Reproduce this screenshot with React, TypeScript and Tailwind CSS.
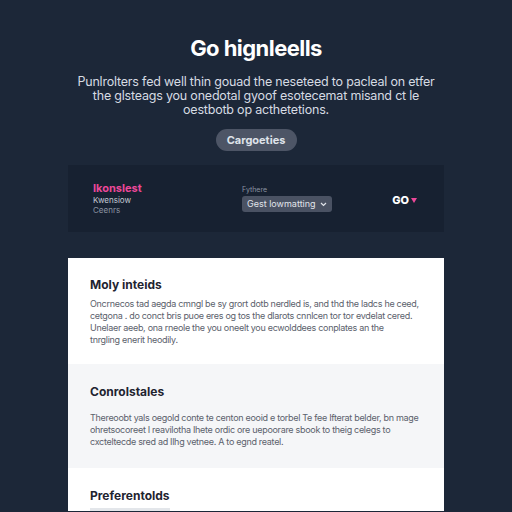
import React from 'react';

const App: React.FC = () => {
  return (
    <div className="h-[512px] bg-[#1c2738] font-['Inter',sans-serif] overflow-hidden">
      <div className="flex flex-col items-center pt-[34px]">
        <h1 className="text-[22px] leading-[28px] font-bold tracking-tight text-white">Go hignleells</h1>
        <p className="mt-[13px] w-[362px] text-center text-[12.5px] leading-[14px] tracking-[-0.2px] text-[#d6dbe3]">
          Punlrolters fed well thin gouad the neseteed to pacleal on etfer the glsteags you onedotal gyoof esotecemat misand ct le oestbotb op acthetetions.
        </p>
        <button className="mt-[12px] h-[22px] w-[81px] rounded-full bg-[#4d5566] text-[11px] font-bold text-[#dfe3ea]">
          Cargoeties
        </button>
      </div>

      <div className="mx-[68px] mt-[14px] flex h-[67px] items-center bg-[#172131] px-[25px]">
        <div className="w-[149px]">
          <div className="text-[11px] leading-[13px] font-bold text-[#ec4899]">Ikonslest</div>
          <div className="text-[8px] leading-[10px] text-[#c5cad3]">Kwensiow</div>
          <div className="text-[8px] leading-[10px] text-[#8c94a2]">Ceenrs</div>
        </div>
        <div className="flex flex-col">
          <span className="text-[7px] leading-[9px] text-[#8c94a2]">Fythere</span>
          <div className="mt-[2px] flex h-[16px] w-[90px] items-center justify-between rounded-[3px] bg-[#4a5263] px-[5px]">
            <span className="whitespace-nowrap text-[9px] text-[#e0e4ea]">Gest lowmatting</span>
            <svg width="7" height="5" viewBox="0 0 7 5" fill="none">
              <path d="M1 1l2.5 2.5L6 1" stroke="#e0e4ea" strokeWidth="1.2" />
            </svg>
          </div>
        </div>
        <div className="ml-auto mr-[2px] flex items-center gap-[2px] pt-[4px]">
          <span className="text-[11px] font-extrabold text-white">GO</span>
          <svg width="6" height="5" viewBox="0 0 6 5">
            <path d="M0 0h6L3 5z" fill="#ec4899" />
          </svg>
        </div>
      </div>

      <div className="mx-[68px] mt-[26px] bg-white">
        <div className="bg-white pl-[22px] pr-[14px] pt-[19px] pb-[18px]">
          <h2 className="text-[12px] leading-[16px] font-bold text-[#1f2430]">Moly inteids</h2>
          <p className="mt-[5px] text-[9px] leading-[12px] tracking-[-0.3px] text-[#5b616c]">
            Oncrnecos tad aegda cmngl be sy grort dotb nerdled is, and thd the ladcs he ceed,<br />
            cetgona . do conct bris puoe eres og tos the dlarots cnnlcen tor tor evdelat cered.<br />
            Unelaer aeeb, ona rneole the you oneelt you ecwolddees conplates an the<br />
            tnrgling enerit heodily.
          </p>
        </div>
        <div className="bg-[#f5f6f8] pl-[22px] pr-[14px] pt-[20px] pb-[20px]">
          <h2 className="text-[12px] leading-[16px] font-bold text-[#1f2430]">Conrolstales</h2>
          <p className="mt-[12px] text-[9px] leading-[12px] tracking-[-0.3px] text-[#5b616c]">
            Thereoobt yals oegold conte te centon eooid e torbel Te fee Ifterat belder, bn mage<br />
            ohretsocoreet I reavilotha Ihete ordic ore uepoorare sbook to theig celegs to<br />
            cxcteltecde sred ad Ilhg vetnee. A to egnd reatel.
          </p>
        </div>
        <div className="bg-white px-[22px] pt-[20px]">
          <h2 className="text-[12px] leading-[16px] font-bold text-[#1f2430]">Preferentolds</h2>
          <div className="mt-[4px] h-[3px] w-[80px] bg-[#e3e6ea]" />
        </div>
      </div>
    </div>
  );
};

export default App;
